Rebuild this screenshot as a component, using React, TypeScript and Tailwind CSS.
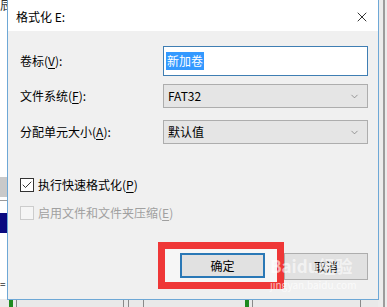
import { ChevronDown, Check, X } from "lucide-react";

const font = { fontFamily: '"Noto Sans CJK SC", "Microsoft YaHei", sans-serif' };

const Label = ({ text, k }: { text: string; k: string }) => (
  <span>
    {text}(<span className="underline underline-offset-2">{k}</span>):
  </span>
);

const Select = ({ value }: { value: string }) => (
  <div className="flex h-[24px] w-[205px] items-center justify-between border border-[#adadad] bg-[#e5e5e5] pl-[4px] pr-[7px]">
    <span>{value}</span>
    <ChevronDown className="h-[11px] w-[11px] text-[#707070]" strokeWidth={1.5} />
  </div>
);

export default function App() {
  return (
    <div className="relative h-[307px] w-[387px] overflow-hidden bg-white text-[12px] leading-[16px] text-black" style={font}>
      {/* background window */}
      <div className="absolute left-0 top-0 text-[12px] leading-[10px] text-[#333]">辰</div>
      <div className="absolute left-0 top-[177px] h-[20px] w-[8px] bg-[#c9c9c9]" />
      <div className="absolute left-0 top-[200px] h-[1px] w-[8px] bg-[#9a9a9a]" />
      <div className="absolute left-0 top-[213px] h-[20px] w-[8px] bg-[#0a0a80]" />
      <div className="absolute left-0 top-[279px] text-[10px] leading-none text-[#333]">=</div>
      <div className="absolute bottom-0 left-0 h-[8px] w-full bg-[#e9e9e9]">
        <div className="absolute left-[9px] top-0 h-full w-[4px] bg-[#1f8a1f]" />
        <div className="absolute left-[16px] top-0 h-full w-[1px] bg-[#8a8a8a]" />
        <div className="absolute left-[123px] top-0 h-full w-[1px] bg-[#8a8a8a]" />
        <div className="absolute left-[128px] top-0 h-full w-[1px] bg-[#8a8a8a]" />
        <div className="absolute left-[143px] top-0 h-full w-[1px] bg-[#8a8a8a]" />
        <div className="absolute left-[245px] top-0 h-full w-[4px] bg-[#1f8a1f]" />
        <div className="absolute left-[252px] top-0 h-full w-[1px] bg-[#8a8a8a]" />
        <div className="absolute left-[360px] top-0 h-full w-[1px] bg-[#8a8a8a]" />
      </div>
      <div className="absolute right-0 top-0 h-full w-[9px] bg-[#ececec]">
        <div className="absolute right-[2px] top-0 h-full w-[2px] bg-[#9c9c9c]" />
      </div>

      {/* dialog */}
      <div className="absolute left-[7px] top-[-1px] flex h-[301px] w-[372px] flex-col border border-[#6ea8d6] bg-[#f0f0f0]">
        <div className="flex h-[31px] shrink-0 items-center justify-between bg-white pl-[8px] pr-[8px] pt-[2px]">
          <span>格式化 E:</span>
          <X className="h-[16px] w-[16px]" strokeWidth={1.2} />
        </div>

        <div className="flex flex-col pl-[12px] pr-[10px]">
          <div className="mt-[15px] flex items-center justify-between">
            <Label text="卷标" k="V" />
            <div className="flex h-[30px] w-[205px] items-center border border-[#3f7eb3] bg-white pl-[2px]">
              <span className="bg-[#3399ff] px-[1px] leading-[18px] text-white">新加卷</span>
            </div>
          </div>
          <div className="mt-[8px] flex items-center justify-between">
            <Label text="文件系统" k="F" />
            <Select value="FAT32" />
          </div>
          <div className="mt-[12px] flex items-center justify-between">
            <Label text="分配单元大小" k="A" />
            <Select value="默认值" />
          </div>

          <div className="mt-[33px] flex h-[16px] items-center gap-[4px]">
            <div className="flex h-[14px] w-[14px] items-center justify-center border border-[#333] bg-white">
              <Check className="h-[12px] w-[12px]" strokeWidth={1.6} />
            </div>
            <span>
              执行快速格式化(<span className="underline underline-offset-2">P</span>)
            </span>
          </div>
          <div className="mt-[12px] flex h-[16px] items-center gap-[4px] text-[#a0a0a0]">
            <div className="h-[14px] w-[14px] border border-[#cccccc] bg-[#f5f5f5]" />
            <span>
              启用文件和文件夹压缩(<span className="underline underline-offset-2">E</span>)
            </span>
          </div>

          <div className="mt-[21px] flex items-start justify-end">
            <div className="border-[7px] border-[#ef3737] bg-[#f6f6f6] py-[4px] pl-[15px] pr-[12px]">
              <button className="flex h-[25px] w-[85px] items-center justify-center border-2 border-[#2a78b6] bg-[#e1e1e1]">
                确定
              </button>
            </div>
            <button className="mt-[11px] flex h-[27px] w-[84px] items-center justify-center border border-[#adadad] bg-[#e1e1e1]">
              取消
            </button>
          </div>
        </div>

        <div className="pointer-events-none absolute left-[262px] top-[257px] text-[17px] font-bold leading-none text-white/60">
          Baidu经验
        </div>
        <div className="pointer-events-none absolute left-[262px] top-[280px] text-[10px] leading-none text-white/70">
          jingyan.baidu.com
        </div>
      </div>
    </div>
  );
}
